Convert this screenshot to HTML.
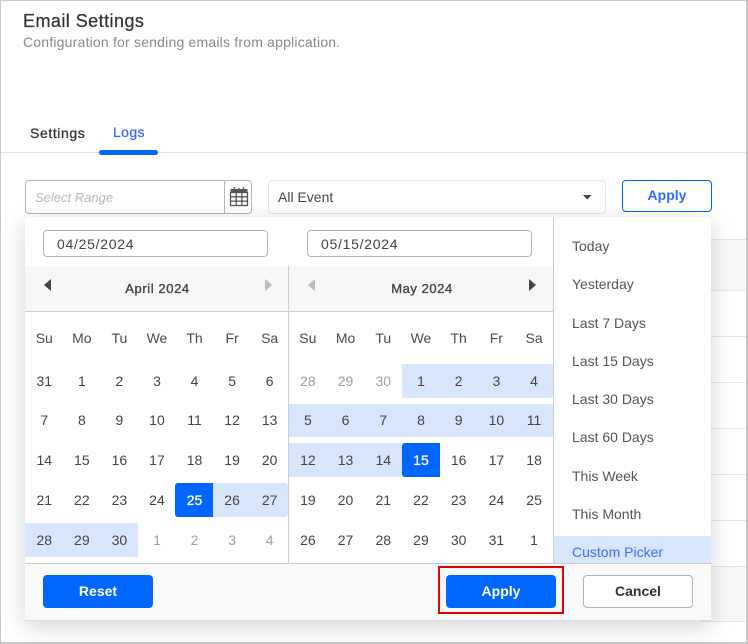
<!DOCTYPE html>
<html>
<head>
<meta charset="utf-8">
<style>
html,body{margin:0;padding:0}
body{width:748px;height:644px;position:relative;overflow:hidden;background:#fff;font-family:"Liberation Sans",Arial,sans-serif;color:#444}
.a{position:absolute;box-sizing:border-box}
.t{position:absolute;white-space:nowrap;line-height:16px}
.cal{position:absolute;top:363px;width:263px;display:grid;grid-template-columns:repeat(7,37.57px);grid-auto-rows:40px;font-size:14px;text-align:center;color:#444}
.cal div{height:34px;line-height:35px;box-sizing:border-box}
.cal.c1 div{padding-left:1px}
.cal.c2{width:264px;grid-template-columns:repeat(7,37.71px)}
.cal div:nth-child(-n+7){margin-top:1px}
.cal div:nth-child(n+8):nth-child(-n+14){margin-top:1px;height:33px;line-height:33px}
.cal .o{color:#a0a0a0}
.cal .r{background:#d8e6fd}
.cal .s{background:#0066ff;color:#fff;-webkit-text-stroke:.3px #fff}
.cal .rl{border-radius:3px 0 0 3px}
.cal .rr{border-radius:0 3px 3px 0}
.wk{position:absolute;top:330px;width:263px;display:grid;grid-template-columns:repeat(7,37.57px);font-size:14px;line-height:16px;text-align:center;color:#4a4a4a}
.wk.c1 span{padding-left:1px}
.wk.c2{width:264px;grid-template-columns:repeat(7,37.71px)}
.li{position:absolute;left:572px;font-size:14px;line-height:16px;color:#555;white-space:nowrap}
.btn{position:absolute;box-sizing:border-box;text-align:center;font-size:14px;font-weight:700;border-radius:4px;white-space:nowrap}
</style>
</head>
<body>
<!-- page frame -->
<div class="a" style="left:0;top:0;width:748px;height:644px;border:1px solid #c9c9c9;border-width:1px 2px 2px 1px"></div>

<div class="t" style="left:23px;top:11px;font-size:18px;line-height:20px;color:#333;letter-spacing:.45px;-webkit-text-stroke:.25px #333">Email Settings</div>
<div class="t" style="left:23px;top:34px;font-size:14px;color:#888;letter-spacing:.2px">Configuration for sending emails from application.</div>

<!-- tabs -->
<div class="a" style="left:1px;top:152px;width:745px;height:1px;background:#e4e4e4"></div>
<div class="t" style="left:30px;top:125px;font-size:14px;color:#333;letter-spacing:.6px;-webkit-text-stroke:.3px #333">Settings</div>
<div class="t" style="left:113px;top:124px;font-size:14px;color:#3b6cff;letter-spacing:.4px;-webkit-text-stroke:.3px #3b6cff">Logs</div>
<div class="a" style="left:99px;top:150px;width:59px;height:5px;background:#0066ff;border-radius:3px"></div>

<!-- background table -->
<div class="a" style="left:700px;top:239px;width:46px;height:52px;background:#f7f7f7;border-top:1px solid #e6e6e6;border-bottom:1px solid #e6e6e6"></div>
<div class="a" style="left:700px;top:336px;width:46px;height:1px;background:#e6e6e6"></div>
<div class="a" style="left:700px;top:382px;width:46px;height:1px;background:#e6e6e6"></div>
<div class="a" style="left:700px;top:428px;width:46px;height:1px;background:#e6e6e6"></div>
<div class="a" style="left:700px;top:474px;width:46px;height:1px;background:#e6e6e6"></div>
<div class="a" style="left:700px;top:520px;width:46px;height:1px;background:#e6e6e6"></div>
<div class="a" style="left:700px;top:566px;width:46px;height:56px;background:#f7f7f7;border-top:1px solid #e6e6e6;border-bottom:1px solid #e6e6e6"></div>

<!-- filter row -->
<div class="a" style="left:25px;top:180px;width:227px;height:34px;border:1px solid #b5b5b5;border-radius:4px;background:#fff"></div>
<div class="a" style="left:224px;top:180px;width:1px;height:34px;background:#b5b5b5"></div>
<div class="t" style="left:35px;top:190px;font-size:13px;font-style:italic;color:#b8b8b8">Select Range</div>
<svg class="a" style="left:229px;top:184px" width="20" height="24" viewBox="0 0 20 24">
  <path d="M1.5 5H18.5V8H1.5Z" fill="#555"/>
  <path d="M5.5 3V6M14.5 3V6M10 4V6" stroke="#666" stroke-width="1.6"/>
  <path d="M1.5 8.5H18.5V21.5H1.5ZM1.5 12.8H18.5M1.5 17.1H18.5M7.2 8.5V21.5M12.8 8.5V21.5" fill="none" stroke="#555" stroke-width="1.3"/>
</svg>

<div class="a" style="left:268px;top:180px;width:338px;height:34px;border:1px solid #e5e5e5;border-radius:4px;background:#fff"></div>
<div class="t" style="left:278px;top:189px;font-size:14px;color:#444">All Event</div>
<svg class="a" style="left:583px;top:195px" width="9" height="5" viewBox="0 0 9 5"><path d="M0 0H8.5L4.2 4.5Z" fill="#444"/></svg>

<div class="btn" style="left:622px;top:180px;width:90px;height:32px;border:1px solid #0066ff;background:#fff;color:#2f6bff;line-height:29px">Apply</div>

<!-- popup -->
<div class="a" style="left:25px;top:217px;width:686px;height:404px;background:#fff;box-shadow:0 6px 22px rgba(0,0,0,.17)"></div>

<div class="a" style="left:43px;top:230px;width:225px;height:27px;border:1px solid #b5b5b5;border-radius:4px"></div>
<div class="t" style="left:57px;top:236px;font-size:14px;color:#444;letter-spacing:.72px">04/25/2024</div>
<div class="a" style="left:307px;top:230px;width:225px;height:27px;border:1px solid #b5b5b5;border-radius:4px"></div>
<div class="t" style="left:321px;top:236px;font-size:14px;color:#444;letter-spacing:.72px">05/15/2024</div>

<!-- month headers -->
<div class="a" style="left:25px;top:266px;width:528px;height:46px;background:#f7f7f7;border-bottom:1px solid #ccc"></div>
<div class="a" style="left:288px;top:266px;width:1px;height:297px;background:#ccc"></div>
<div class="a" style="left:553px;top:217px;width:1px;height:346px;background:#ccc"></div>
<div class="t" style="left:26px;width:263px;top:281px;text-align:center;font-size:13px;color:#444;letter-spacing:.6px;-webkit-text-stroke:.35px #444">April 2024</div>
<div class="t" style="left:290px;width:264px;top:281px;text-align:center;font-size:13px;color:#444;letter-spacing:.55px;-webkit-text-stroke:.35px #444">May 2024</div>
<svg class="a" style="left:44px;top:279px" width="7" height="12" viewBox="0 0 7 12"><path d="M7 0V12L0 6Z" fill="#444"/></svg>
<svg class="a" style="left:265px;top:279px" width="7" height="12" viewBox="0 0 7 12"><path d="M0 0V12L7 6Z" fill="#bbb"/></svg>
<svg class="a" style="left:308px;top:279px" width="7" height="12" viewBox="0 0 7 12"><path d="M7 0V12L0 6Z" fill="#bbb"/></svg>
<svg class="a" style="left:529px;top:279px" width="7" height="12" viewBox="0 0 7 12"><path d="M0 0V12L7 6Z" fill="#444"/></svg>

<div class="wk c1" style="left:25px"><span>Su</span><span>Mo</span><span>Tu</span><span>We</span><span>Th</span><span>Fr</span><span>Sa</span></div>
<div class="wk c2" style="left:289px"><span>Su</span><span>Mo</span><span>Tu</span><span>We</span><span>Th</span><span>Fr</span><span>Sa</span></div>

<div class="cal c1" style="left:25px">
<div>31</div><div>1</div><div>2</div><div>3</div><div>4</div><div>5</div><div>6</div>
<div>7</div><div>8</div><div>9</div><div>10</div><div>11</div><div>12</div><div>13</div>
<div>14</div><div>15</div><div>16</div><div>17</div><div>18</div><div>19</div><div>20</div>
<div>21</div><div>22</div><div>23</div><div>24</div><div class="s rl">25</div><div class="r">26</div><div class="r rr">27</div>
<div class="r">28</div><div class="r">29</div><div class="r">30</div><div class="o">1</div><div class="o">2</div><div class="o">3</div><div class="o">4</div>
</div>

<div class="cal c2" style="left:289px">
<div class="o">28</div><div class="o">29</div><div class="o">30</div><div class="r">1</div><div class="r">2</div><div class="r">3</div><div class="r rr">4</div>
<div class="r">5</div><div class="r">6</div><div class="r">7</div><div class="r">8</div><div class="r">9</div><div class="r">10</div><div class="r rr">11</div>
<div class="r">12</div><div class="r">13</div><div class="r">14</div><div class="s rl">15</div><div>16</div><div>17</div><div>18</div>
<div>19</div><div>20</div><div>21</div><div>22</div><div>23</div><div>24</div><div>25</div>
<div>26</div><div>27</div><div>28</div><div>29</div><div>30</div><div>31</div><div>1</div>
</div>

<!-- presets -->
<div class="a" style="left:554px;top:536px;width:157px;height:27px;background:#d8e6fd"></div>
<div class="li" style="top:238px">Today</div>
<div class="li" style="top:276px">Yesterday</div>
<div class="li" style="top:315px">Last 7 Days</div>
<div class="li" style="top:353px">Last 15 Days</div>
<div class="li" style="top:391px">Last 30 Days</div>
<div class="li" style="top:429px">Last 60 Days</div>
<div class="li" style="top:468px">This Week</div>
<div class="li" style="top:506px">This Month</div>
<div class="li" style="top:544px;color:#3b6cff">Custom Picker</div>

<!-- footer -->
<div class="a" style="left:25px;top:563px;width:686px;height:58px;background:#f9f9f9;border-top:1px solid #ccc;border-bottom:1px solid #ddd"></div>
<div class="btn" style="left:43px;top:575px;width:110px;height:33px;background:#0066ff;color:#fff;line-height:32px">Reset</div>
<div class="btn" style="left:446px;top:575px;width:110px;height:33px;background:#0066ff;color:#fff;line-height:33px">Apply</div>
<div class="a" style="left:438px;top:566px;width:126px;height:48px;border:2px solid #e60000"></div>
<div class="btn" style="left:583px;top:575px;width:110px;height:33px;background:#fff;border:1px solid #b5b5b5;color:#333;line-height:31px">Cancel</div>
</body>
</html>
